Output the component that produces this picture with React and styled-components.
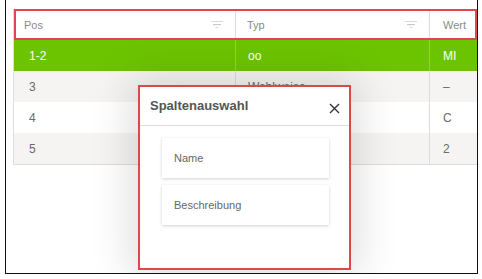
import React from "react";
import styled, { createGlobalStyle } from "styled-components";

const GlobalStyle = createGlobalStyle`
  html, body {
    margin: 0;
    padding: 0;
    background: #ffffff;
    font-family: "Liberation Sans", Arial, sans-serif;
  }
`;

const Frame = styled.div`
  position: relative;
  margin-left: 5px;
  width: 473px;
  height: 274px;
  padding: 9px 0 0 7px;
  box-sizing: border-box;
  border: 1px solid #111;
  border-top: none;
  overflow: hidden;
`;

const Table = styled.div`
  width: 463px;
  overflow: hidden;
  border-left: 1px solid #dedede;
`;

const HeaderRow = styled.div`
  display: grid;
  grid-template-columns: 222px 194px 120px;
  height: 31px;
  box-sizing: border-box;
  box-shadow: inset 0 0 0 2px #e0474c;
  background: #fff;
`;

const HeadCell = styled.div`
  display: flex;
  align-items: center;
  justify-content: space-between;
  padding: 0 12px 0 ${(p) => p.$pl || 10}px;
  font-size: 11px;
  color: #8a8a8a;
  border-right: 1px solid #dcdcdc;
  margin: 2px 0;
`;

const Row = styled.div`
  display: grid;
  grid-template-columns: 222px 194px 120px;
  height: 31px;
  background: ${(p) => (p.$active ? "#6cc400" : p.$odd ? "#f5f4f2" : "#ffffff")};
  color: ${(p) => (p.$active ? "#ffffff" : "#6a6a6a")};
  border-bottom: ${(p) => (p.$last ? "1px solid #dcdcdc" : "none")};
`;

const Cell = styled.div`
  display: flex;
  align-items: center;
  padding-left: ${(p) => p.$pl || 12}px;
  font-size: 12px;
  border-right: 1px solid ${(p) => (p.$active ? "#8fd43a" : "#dcdcdc")};
  white-space: nowrap;
  overflow: hidden;
`;

const FilterIcon = () => (
  <svg width="12" height="7" viewBox="0 0 12 7">
    <rect x="0" y="0" width="12" height="1" fill="#d9d9d9" />
    <rect x="2" y="3" width="8" height="1.2" fill="#c9c9c9" />
    <rect x="4.5" y="6" width="3" height="1" fill="#d9d9d9" />
  </svg>
);

const Modal = styled.div`
  position: absolute;
  left: 132px;
  top: 85px;
  width: 213px;
  height: 185px;
  box-sizing: border-box;
  background: #fff;
  border: 2px solid #e0474c;
  box-shadow: 0 0 40px 6px rgba(0, 0, 0, 0.14);
  display: flex;
  flex-direction: column;
`;

const ModalHeader = styled.div`
  display: flex;
  align-items: center;
  justify-content: space-between;
  height: 38px;
  padding: 0 9px 0 10px;
  border-bottom: 1px solid #dcdcdc;
`;

const Title = styled.div`
  font-size: 13px;
  font-weight: bold;
  color: #555;
  margin-top: -2px;
`;

const CloseButton = styled.button`
  border: none;
  background: none;
  padding: 0;
  display: flex;
  margin-top: 4px;
`;

const OptionList = styled.div`
  display: flex;
  flex-direction: column;
  gap: 7px;
  padding: 12px 20px 0 22px;
`;

const Option = styled.div`
  height: 40px;
  display: flex;
  align-items: center;
  padding-left: 12px;
  font-size: 11px;
  color: #666;
  background: #fff;
  box-shadow: 0 1px 3px rgba(0, 0, 0, 0.18);
`;

const rows = [
  { pos: "1-2", typ: "oo", wert: "MI" },
  { pos: "3", typ: "Wahlweise", wert: "–" },
  { pos: "4", typ: "", wert: "C" },
  { pos: "5", typ: "", wert: "2" },
];

export default function App() {
  return (
    <>
      <GlobalStyle />
      <Frame>
        <Table>
          <HeaderRow>
            <HeadCell $pl={10}>
              Pos <FilterIcon />
            </HeadCell>
            <HeadCell $pl={11}>
              Typ <FilterIcon />
            </HeadCell>
            <HeadCell $pl={13}>Wert</HeadCell>
          </HeaderRow>
          {rows.map((r, i) => (
            <Row key={r.pos} $active={i === 0} $odd={i % 2 === 1} $last={i === rows.length - 1}>
              <Cell $pl={15} $active={i === 0}>{r.pos}</Cell>
              <Cell $pl={12} $active={i === 0}>{r.typ}</Cell>
              <Cell $pl={13} $active={i === 0}>{r.wert}</Cell>
            </Row>
          ))}
        </Table>
        <Modal>
          <ModalHeader>
            <Title>Spaltenauswahl</Title>
            <CloseButton aria-label="Schließen">
              <svg width="11" height="11" viewBox="0 0 11 11">
                <path d="M1 1L10 10M10 1L1 10" stroke="#333" strokeWidth="1.4" />
              </svg>
            </CloseButton>
          </ModalHeader>
          <OptionList>
            <Option>Name</Option>
            <Option>Beschreibung</Option>
          </OptionList>
        </Modal>
      </Frame>
    </>
  );
}
